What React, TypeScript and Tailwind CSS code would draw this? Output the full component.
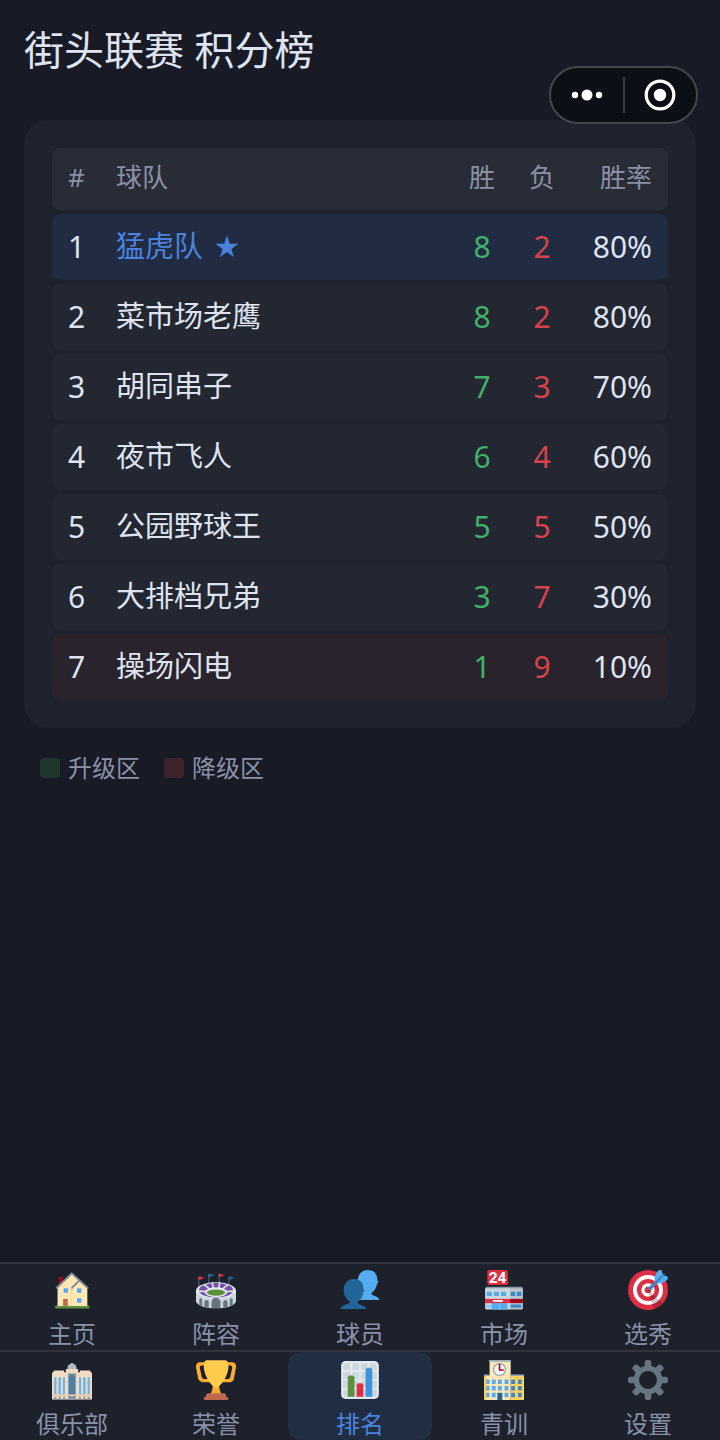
import type { ReactNode } from "react"
import clsx from "clsx"

type Team = {
  rank: number
  name: string
  wins: number
  losses: number
  rate: string
  mine?: boolean
  relegated?: boolean
}

const teams: Team[] = [
  { rank: 1, name: "猛虎队", wins: 8, losses: 2, rate: "80%", mine: true },
  { rank: 2, name: "菜市场老鹰", wins: 8, losses: 2, rate: "80%" },
  { rank: 3, name: "胡同串子", wins: 7, losses: 3, rate: "70%" },
  { rank: 4, name: "夜市飞人", wins: 6, losses: 4, rate: "60%" },
  { rank: 5, name: "公园野球王", wins: 5, losses: 5, rate: "50%" },
  { rank: 6, name: "大排档兄弟", wins: 3, losses: 7, rate: "30%" },
  { rank: 7, name: "操场闪电", wins: 1, losses: 9, rate: "10%", relegated: true },
]

function Icon({ children }: { children: ReactNode }) {
  return (
    <svg viewBox="0 0 36 36" className="h-10 w-10" aria-hidden="true">
      {children}
    </svg>
  )
}

function HouseIcon() {
  return (
    <Icon>
      <path fill="#5C913B" d="M4 32h28.500a1.300 1.300 0 0 1 0 2.700H4A1.300 1.300 0 0 1 4 32z" />
      <path fill="#A0041E" d="M6.300 6H10v8H6.300z" />
      <path fill="#FFE8B6" d="M5 15 17.800 3 31.800 16v16.500H5z" />
      <path fill="#FFD983" d="M17.300 16.500h.9v16h-.9z" />
      <path
        fill="none"
        stroke="#7D8C96"
        strokeWidth="1.700"
        strokeLinecap="round"
        strokeLinejoin="round"
        d="M4.300 16 17.800 3 32 16M18 16l6.500-6.500"
      />
      <path fill="#55ACEE" d="M10.500 16.500h4v4h-4zM22.500 16.500h4v4h-4zM22.500 25.500h4v4h-4z" />
      <path fill="#C1694F" d="M10 26h4.200v6.300H10z" />
    </Icon>
  )
}

function StadiumIcon() {
  return (
    <Icon>
      <path stroke="#66757F" strokeWidth=".8" d="M2.500 6v10M11.500 3.500v9M20.700 3.500v9M29.700 6v10" />
      <path fill="#DD2E44" d="m2.500 5.500 5 1.700-5 2zM20.700 3l5 1.700-5 2z" />
      <path fill="#226699" d="m11.500 3 5 1.700-5 2zM29.700 5.500l5 1.700-5 2z" />
      <path fill="#CCD6DD" d="M0 18.500v10C2 32.500 9 34.500 18 34.500s16-2 18-6v-10z" />
      <ellipse cx="18" cy="18.500" rx="18" ry="7.500" fill="#E1E8ED" />
      <ellipse cx="18" cy="18.300" rx="15.500" ry="6.500" fill="#744EAA" />
      <path stroke="#E1E8ED" strokeWidth="1.500" d="m7 13 5 4M29 13l-5 4M14.500 11l1 5M21.500 11l-1 5M2 19l8 .5M34 19l-8 .5" />
      <ellipse cx="18" cy="20" rx="10" ry="4.500" fill="#E1E8ED" />
      <ellipse cx="18" cy="20.300" rx="8.200" ry="2.800" fill="#5C913B" />
      <path
        fill="#66757F"
        d="M14 34.300V29a4 4 0 0 1 8 0v5.300zM7.500 33.500V29a2 2 0 0 1 4 0v5zM28.500 33.500V29a2 2 0 0 0-4 0v5zM3 31.500v-5a1.300 1.500 0 0 1 2.600 1v5zM33 31.500v-5a1.300 1.500 0 0 0-2.600 1v5z"
      />
    </Icon>
  )
}

function PeopleIcon() {
  return (
    <Icon>
      <path
        fill="#55ACEE"
        d="M16 10C16 4 19.500 0 25 0c5 0 8.500 3 8.500 8 0 .8.900 2.300.9 3 0 .8-.9.700-1 1-.4 4-2.400 7-5 8.500v1.200c0 .9 2 1.300 3.700 2 1.800.7 3 1.800 3 3.300H18V15z"
      />
      <path
        fill="#226699"
        d="M3.300 18C3.300 12 7 8 12.500 8c5 0 8.500 3 8.500 8 0 .8.900 2.300.9 3 0 .8-.9.700-1 1-.4 4-2.400 7-5 8.500v1.200c0 .9 2 1.300 3.700 2C22 32.500 23.500 33.600 23.500 35H.500c0-2 2-3 4-3.700 1.800-.6 4-1.300 4-2.100v-1.400C5 26 3.300 22 3.300 18z"
      />
    </Icon>
  )
}

function StoreIcon() {
  return (
    <Icon>
      <path fill="#B8C5CE" d="M23 16h11a1 1 0 0 1 1 1v17.500a1 1 0 0 1-1 1H23z" />
      <path fill="#CCD6DD" d="M2 16h21.500v19.500H2a1 1 0 0 1-1-1V17a1 1 0 0 1 1-1z" />
      <path fill="#8899A6" d="M1.500 15h33v1.500h-33z" />
      <path fill="#55ACEE" d="M2.500 19.500h4.500v4H2.500zM9 19.500h4.500v4H9zM15.500 19.500H20v4h-4.500zM7 29h14v6.500H7z" />
      <path fill="#3B88C3" d="M24 19.500h4v4h-4zM29.500 19.500h4v4h-4zM24 31h9.500v3H24z" />
      <path fill="#8CCAF7" d="M2 31h5v3H2zM13.600 30h1v5.500h-1z" />
      <path fill="#DD2E44" d="M1 26h22.500v3.800H1z" />
      <path fill="#A0041E" d="M23.500 26H35v3.800H23.500z" />
      <path fill="#fff" d="M8 27h9v1.600H8z" />
      <rect x="3" y="0" width="18.500" height="13.500" rx="1.500" fill="#DD2E44" />
      <text
        x="12.200"
        y="11.800"
        fill="#fff"
        fontSize="14"
        fontWeight="700"
        textAnchor="middle"
        fontFamily="Roboto, sans-serif"
      >
        24
      </text>
    </Icon>
  )
}

function TargetIcon() {
  return (
    <Icon>
      <circle fill="#DD2E44" cx="18" cy="18" r="18" />
      <circle fill="#fff" cx="18" cy="18" r="13.500" />
      <circle fill="#DD2E44" cx="18" cy="18" r="10" />
      <circle fill="#fff" cx="18" cy="18" r="6" />
      <circle fill="#DD2E44" cx="18" cy="18" r="3" />
      <path opacity=".2" d="M18.240 18.282l13.144 11.754s-2.647 3.376-7.890 5.109L17.579 18.420l.661-.138z" />
      <path
        fill="#55ACEE"
        d="M24.016 6.981c-.403 2.079 0 4.691 0 4.691l7.054-7.388c.291-1.454-.528-3.932-1.718-4.238-1.190-.306-4.079.803-5.336 6.935zm5.003 5.003c-2.079.403-4.691 0-4.691 0l7.388-7.054c1.454-.291 3.932.528 4.238 1.718.306 1.190-.803 4.079-6.935 5.336z"
      />
      <path
        fill="#3A87C2"
        d="M32.798 4.485L21.176 17.587c-.362.362-1.673.882-2.510.046-.836-.836-.419-2.080-.057-2.443L31.815 3.501s.676-.635 1.159-.152-.176 1.136-.176 1.136z"
      />
    </Icon>
  )
}

function ClubIcon() {
  return (
    <Icon>
      <path fill="#AEBBC4" d="M14 9V6.500c0-1.500 1.300-2.500 2.500-2.800.3-1.300 2.700-1.300 3 0 1.200.3 2.500 1.300 2.500 2.800V9z" />
      <path fill="#F0DCC4" d="M0 12 2 9.500h9V11h1.500V8h11v3H25V9.500h9l2 2.500v23.500H0z" />
      <path fill="#8899A6" d="M14.500 12h7v23.500h-7z" />
      <path
        fill="#6DB4EA"
        d="M2 15.500h2V31H2zM5.800 15.500h2.200V31H5.800zM9.700 15.500h2V31h-2zM24.300 15.500h2V31h-2zM28 15.500h2.200V31H28zM32 15.500h2V31h-2z"
      />
      <path fill="#3B78A6" d="M15.300 14h1.400v17h-1.400zM17.300 13h1.400v18h-1.400zM19.300 14h1.400v17h-1.400z" />
      <path fill="#E6C8A8" d="M0 31h36v1.300H0z" />
      <path
        fill="#8899A6"
        d="M2 33h2v2.500H2zM6 33h2v2.500H6zM10 33h2v2.500h-2zM14.500 32.500h7v3h-7zM24 33h2v2.500h-2zM28 33h2v2.500h-2zM32 33h2v2.500h-2z"
      />
    </Icon>
  )
}

function TrophyIcon() {
  return (
    <Icon>
      <path
        fill="#FFAC33"
        d="M5.123 5h6C12.227 5 13 4.896 13 6V4c0-1.104-.773-2-1.877-2h-8c-2 0-3.583 2.125-3 5 0 0 1.791 9.375 1.917 9.958C2.373 18.500 4.164 20 6.081 20h6.958c1.105 0-.039-1.896-.039-3v-2c0 1.104-.773 2-1.877 2h-4c-1.104 0-1.833-1.042-2-2S3.539 7.667 3.539 7.667C3.206 5.750 4.018 5 5.123 5zm25.812 0h-6C23.831 5 22 4.896 22 6V4c0-1.104 1.831-2 2.935-2h8c2 0 3.584 2.125 3 5 0 0-1.633 9.419-1.771 10-.354 1.500-2.042 3-4 3h-7.146C21.914 20 22 18.104 22 17v-2c0 1.104 1.831 2 2.935 2h4c1.104 0 1.834-1.042 2-2s1.584-7.333 1.584-7.333C32.851 5.750 32.040 5 30.935 5zM20.832 22c0-6.958-2.709 0-2.709 0s-3-6.958-3 0-3.291 10-3.291 10h12.292c-.001 0-3.292-3.042-3.292-10z"
      />
      <path
        fill="#FFCC4D"
        d="M29.123 6.577c0 6.775-6.770 18.192-11 18.192-4.231 0-11-11.417-11-18.192 0-5.195 1-6.319 3-6.319 1.374 0 6.025-.027 8-.027l7-.001c2.917-.001 4 .684 4 6.347z"
      />
      <path
        fill="#C1694F"
        d="M27 33c0 1.104.227 2-.877 2h-16C9.018 35 9 34.104 9 33v-1c0-1.104 1.164-2 2.206-2h13.917c1.042 0 1.877.896 1.877 2v1z"
      />
      <path
        fill="#C1694F"
        d="M29 34.625c0 .76.165 1.375-1.252 1.375H8.498C7.206 36 7 35.385 7 34.625v-.25C7 33.615 7.738 33 8.498 33h19.250c.759 0 1.252.615 1.252 1.375v.25z"
      />
    </Icon>
  )
}

function ChartIcon() {
  return (
    <Icon>
      <rect x="2" y="2" width="32" height="32" rx="3" fill="#CCD6DD" />
      <path
        fill="#E1E8ED"
        d="M31 1H5C2.791 1 1 2.791 1 5v26c0 2.209 1.791 4 4 4h26c2.209 0 4-1.791 4-4V5c0-2.209-1.791-4-4-4zm0 2c1.103 0 2 .897 2 2v4h-6V3h4zm-4 16h6v6h-6v-6zm0-2v-6h6v6h-6zM25 3v6h-6V3h6zm-6 8h6v6h-6v-6zm0 8h6v6h-6v-6zM17 3v6h-6V3h6zm-6 8h6v6h-6v-6zm0 8h6v6h-6v-6zM3 5c0-1.103.897-2 2-2h4v6H3V5zm0 6h6v6H3v-6zm0 8h6v6H3v-6zm2 14c-1.103 0-2-.897-2-2v-4h6v6H5zm6 0v-6h6v6h-6zm8 0v-6h6v6h-6zm12 0h-4v-6h6v4c0 1.103-.897 2-2 2z"
      />
      <path fill="#5C913B" d="M13 33H7V16c0-1.104.896-2 2-2h2c1.104 0 2 .896 2 2v17z" />
      <path fill="#3B94D9" d="M29 33h-6V9c0-1.104.896-2 2-2h2c1.104 0 2 .896 2 2v24z" />
      <path fill="#DD2E44" d="M21 33h-6V23c0-1.104.896-2 2-2h2c1.104 0 2 .896 2 2v10z" />
    </Icon>
  )
}

function SchoolIcon() {
  return (
    <Icon>
      <path fill="#FFD464" d="M24 14h11a1 1 0 0 1 1 1v20a1 1 0 0 1-1 1H24z" />
      <path fill="#FFE8B6" d="M5 1h19v35H1a1 1 0 0 1-1-1V15a1 1 0 0 1 1-1h4z" />
      <path fill="#FFCC4D" d="M0 14.500V35a1 1 0 0 0 1 1h1V14.500z" />
      <path fill="#99AAB5" d="M5 0h18.500a.7.700 0 0 1 0 1.500H5A.7.700 0 0 1 5 0zM0 13h5v1.300H0zM24 13h12v1.300H24z" />
      <circle cx="14" cy="8.500" r="6" fill="#99AAB5" />
      <circle cx="14" cy="8.500" r="4.700" fill="#F5F8FA" />
      <path fill="none" stroke="#A0041E" strokeWidth="1.500" d="M14 3.500V9h3.800" />
      <path
        fill="#55ACEE"
        d="M2 17.500h3v4H2zM7 17.500h3.500v4H7zM12.500 17.500H16v4h-3.500zM18.500 17.500H22v4h-3.500zM2 23.500h3v4H2zM7 23.500h3.500v4H7zM12.500 23.500H16v4h-3.500zM18.500 23.500H22v4h-3.500zM2 29.500h3v4H2zM7 29.500h3.500v4H7zM18.500 29.500H22v4h-3.500z"
      />
      <path fill="#3B88C3" d="M24.500 17.500H28v4h-3.500zM30.500 17.500H34v4h-3.500zM24.500 23.500H28v4h-3.500zM30.500 23.500H34v4h-3.500zM24.500 29.500H28v4h-3.500zM30.500 29.500H34v4h-3.500z" />
      <path fill="#226699" d="M12 29.500h4.500V36H12z" />
    </Icon>
  )
}

function GearIcon() {
  return (
    <Icon>
      <path
        fill="#66757F"
        d="M34 15h-3.362c-.324-1.369-.864-2.651-1.582-3.814l2.379-2.379c.781-.781.781-2.048 0-2.829l-1.414-1.414c-.781-.781-2.047-.781-2.828 0l-2.379 2.379C23.650 6.225 22.369 5.686 21 5.362V2c0-1.104-.896-2-2-2h-2c-1.104 0-2 .896-2 2v3.362c-1.369.324-2.651.864-3.814 1.582L8.808 4.565c-.781-.781-2.048-.781-2.828 0L4.565 5.979c-.781.781-.781 2.048-.001 2.829l2.379 2.379C6.225 12.350 5.686 13.632 5.362 15H2c-1.104 0-2 .896-2 2v2c0 1.104.896 2 2 2h3.362c.324 1.368.864 2.650 1.582 3.813l-2.379 2.379c-.78.78-.78 2.048.001 2.829l1.414 1.414c.78.78 2.047.78 2.828 0l2.379-2.379c1.163.719 2.445 1.258 3.814 1.582V34c0 1.104.896 2 2 2h2c1.104 0 2-.896 2-2v-3.362c1.368-.324 2.650-.864 3.813-1.582l2.379 2.379c.781.781 2.047.781 2.828 0l1.414-1.414c.781-.781.781-2.048 0-2.829l-2.379-2.379c.719-1.163 1.258-2.445 1.582-3.814H34c1.104 0 2-.896 2-2v-2C36 15.896 35.104 15 34 15zM18 26c-4.418 0-8-3.582-8-8s3.582-8 8-8 8 3.582 8 8-3.582 8-8 8z"
      />
    </Icon>
  )
}

type Tab = { label: string; icon: ReactNode; active?: boolean }

const mainTabs: Tab[] = [
  { label: "主页", icon: <HouseIcon /> },
  { label: "阵容", icon: <StadiumIcon /> },
  { label: "球员", icon: <PeopleIcon /> },
  { label: "市场", icon: <StoreIcon /> },
  { label: "选秀", icon: <TargetIcon /> },
]

const moreTabs: Tab[] = [
  { label: "俱乐部", icon: <ClubIcon /> },
  { label: "荣誉", icon: <TrophyIcon /> },
  { label: "排名", icon: <ChartIcon />, active: true },
  { label: "青训", icon: <SchoolIcon /> },
  { label: "设置", icon: <GearIcon /> },
]

function TabRow({ tabs, className }: { tabs: Tab[]; className: string }) {
  return (
    <div className="grid grid-cols-5 border-t-2 border-[#30343f]">
      {tabs.map((tab) => (
        <button
          key={tab.label}
          type="button"
          aria-current={tab.active ? "page" : undefined}
          className={clsx(
            "flex flex-col items-center gap-2 rounded-xl text-2xl",
            className,
            tab.active ? "bg-[#212d42] text-[#4a82de]" : "text-[#8b91a7]",
          )}
        >
          {tab.icon}
          <span>{tab.label}</span>
        </button>
      ))}
    </div>
  )
}

function Capsule() {
  return (
    <div className="absolute top-[66px] right-[22px] flex h-[58px] w-[149px] items-center rounded-full border-2 border-[#44464c] bg-[#0d0f16]">
      <button type="button" aria-label="更多" className="flex flex-1 items-center justify-center">
        <svg viewBox="0 0 32 12" className="h-3 w-8" fill="#fff">
          <circle cx="4" cy="6" r="3.200" />
          <circle cx="16" cy="6" r="5.500" />
          <circle cx="28" cy="6" r="3.200" />
        </svg>
      </button>
      <span className="h-9 w-0.5 bg-[#3a3c43]" />
      <button type="button" aria-label="关闭" className="flex flex-1 items-center justify-center">
        <svg viewBox="0 0 32 32" className="h-8 w-8">
          <circle cx="16" cy="16" r="13.800" fill="none" stroke="#fff" strokeWidth="3.200" />
          <circle cx="16" cy="16" r="6.200" fill="#fff" />
        </svg>
      </button>
    </div>
  )
}

export default function App() {
  return (
    <div className="relative flex min-h-screen flex-col bg-[#181b25] font-['Noto_Sans','Noto_Sans_CJK_SC',sans-serif] text-[#dfe3f0]">
      <Capsule />
      <main className="flex-1 px-6 pt-6">
        <h1 className="text-[40px] leading-13">街头联赛 积分榜</h1>

        <section className="mt-11 rounded-3xl bg-[#1d222d] px-7 py-6">
          <table className="w-full table-fixed border-separate border-spacing-x-0 border-spacing-y-1">
            <thead className="text-[26px] text-[#8b90a4]">
              <tr className="h-[62px] *:bg-[#282c37] *:p-0 *:pb-1 *:font-normal">
                <th scope="col" className="w-16 rounded-l-lg text-left">
                  <span className="pl-4">#</span>
                </th>
                <th scope="col" className="text-left">球队</th>
                <th scope="col" className="w-15">胜</th>
                <th scope="col" className="w-15">负</th>
                <th scope="col" className="w-24 rounded-r-lg text-right">
                  <span className="pr-4">胜率</span>
                </th>
              </tr>
            </thead>
            <tbody className="text-[30px]">
              {teams.map((team) => (
                <tr
                  key={team.rank}
                  className={clsx(
                    "h-[66px] *:p-0 *:pb-0.5",
                    team.mine && "*:bg-[#212c42]",
                    team.relegated && "*:bg-[#29232d]",
                    !team.mine && !team.relegated && "*:bg-[#232732]",
                  )}
                >
                  <td className="rounded-l-lg">
                    <span className="pl-4">{team.rank}</span>
                  </td>
                  <td className="text-[29px]">
                    {team.mine ? (
                      <div className="flex items-center gap-3 text-[#4a82de]">
                        {team.name}
                        <span className="text-2xl">★</span>
                      </div>
                    ) : (
                      team.name
                    )}
                  </td>
                  <td className="text-center text-[#41b069]">{team.wins}</td>
                  <td className="text-center text-[#d8424a]">{team.losses}</td>
                  <td className="rounded-r-lg text-right">
                    <span className="pr-4">{team.rate}</span>
                  </td>
                </tr>
              ))}
            </tbody>
          </table>
        </section>

        <div className="mt-6 flex gap-6 px-4 text-2xl text-[#8b91a7]">
          <div className="flex items-center gap-2">
            <span className="h-5 w-5 rounded bg-[#1f362f]" />
            升级区
          </div>
          <div className="flex items-center gap-2">
            <span className="h-5 w-5 rounded bg-[#3d232a]" />
            降级区
          </div>
        </div>
      </main>

      <nav className="bg-[#1c212c]">
        <TabRow tabs={mainTabs} className="pt-1.5" />
        <TabRow tabs={moreTabs} className="pt-2" />
      </nav>
    </div>
  )
}
